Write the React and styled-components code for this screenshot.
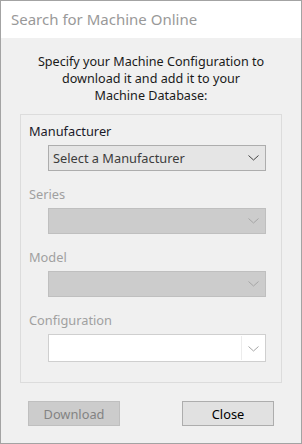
import styled, { createGlobalStyle } from "styled-components"

const GlobalStyle = createGlobalStyle`
  html, body {
    margin: 0;
    padding: 0;
    background: #ffffff;
  }
  * { box-sizing: border-box; }
`

function Chevron({ disabled }) {
  return (
    <svg width="11" height="6" viewBox="0 0 11 6">
      <polyline
        points="0.5,0.5 5.5,5 10.5,0.5"
        fill="none"
        stroke={disabled ? "#a6a6a6" : "#444444"}
        strokeWidth="1"
      />
    </svg>
  )
}

const fields = ["Series", "Model"]

export default function App() {
  return (
    <>
      <GlobalStyle />
      <Window>
        <TitleBar>Search for Machine Online</TitleBar>
        <Body>
          <Intro>
            Specify your Machine Configuration to<br />
            download it and add it to your<br />
            Machine Database:
          </Intro>

          <GroupBox>
            <Field>
              <Label>Manufacturer</Label>
              <Select>
                <span>Select a Manufacturer</span>
                <Chevron />
              </Select>
            </Field>

            {fields.map((name) => (
              <Field key={name}>
                <Label disabled>{name}</Label>
                <Select disabled>
                  <span />
                  <Chevron disabled />
                </Select>
              </Field>
            ))}

            <Field>
              <Label disabled>Configuration</Label>
              <Combo>
                <ComboInput />
                <ComboButton>
                  <Chevron disabled />
                </ComboButton>
              </Combo>
            </Field>
          </GroupBox>

          <ButtonRow>
            <Button disabled>Download</Button>
            <Button>Close</Button>
          </ButtonRow>
        </Body>
      </Window>
    </>
  )
}

const Window = styled.div`
  width: 302px;
  height: 444px;
  border: 1px solid #a3a3a3;
  display: flex;
  flex-direction: column;
  font-family: "Noto Sans", "Open Sans", sans-serif;
  background: #f0f0f0;
  overflow: hidden;
`
const TitleBar = styled.div`
  height: 37px;
  flex-shrink: 0;
  background: #ffffff;
  color: #999999;
  font-size: 15px;
  padding: 0 0 0 10px;
  display: flex;
  align-items: center;
  padding-bottom: 2px;
`
const Body = styled.div`
  flex-grow: 1;
  display: flex;
  flex-direction: column;
  padding: 15px 19px 0 19px;
`
const Intro = styled.p`
  margin: 0 0 10px 0;
  text-align: center;
  font-size: 12.6px;
  line-height: 17px;
  color: #1a1a1a;
`
const GroupBox = styled.section`
  border: 1px solid #dcdcdc;
  padding: 7px 15px 20px 8px;
  display: flex;
  flex-direction: column;
  gap: 14px;
`
const Field = styled.div`
  display: flex;
  flex-direction: column;
  gap: 5px;
`
const Label = styled.div`
  font-size: 12.8px;
  line-height: 18px;
  color: ${(p) => (p.disabled ? "#a0a0a0" : "#1a1a2a")};
`
const Select = styled.div`
  margin-left: 19px;
  height: 26px;
  display: flex;
  align-items: center;
  justify-content: space-between;
  padding: 0 6px 0 4px;
  font-size: 12.8px;
  color: #3c3c3c;
  background: ${(p) => (p.disabled ? "#cccccc" : "#e5e5e5")};
  border: 1px solid ${(p) => (p.disabled ? "#bfbfbf" : "#adadad")};
`
const Combo = styled.div`
  margin-left: 19px;
  height: 28px;
  display: flex;
  background: #ffffff;
  border: 1px solid #cfcfcf;
`
const ComboInput = styled.div`
  flex-grow: 1;
  margin: 1px 0 1px 1px;
  background: #ffffff;
  border-right: 1px solid #ececec;
`
const ComboButton = styled.div`
  width: 23px;
  display: flex;
  align-items: center;
  justify-content: center;
  padding-top: 2px;
`
const ButtonRow = styled.div`
  display: flex;
  justify-content: space-between;
  padding: 18px 8px 0 8px;
`
const Button = styled.button`
  width: 92px;
  height: 25px;
  font-family: inherit;
  font-size: 12.8px;
  padding: 0;
  color: ${(p) => (p.disabled ? "#838383" : "#000000")};
  background: ${(p) => (p.disabled ? "#cccccc" : "#e1e1e1")};
  border: 1px solid ${(p) => (p.disabled ? "#bfbfbf" : "#adadad")};
`
